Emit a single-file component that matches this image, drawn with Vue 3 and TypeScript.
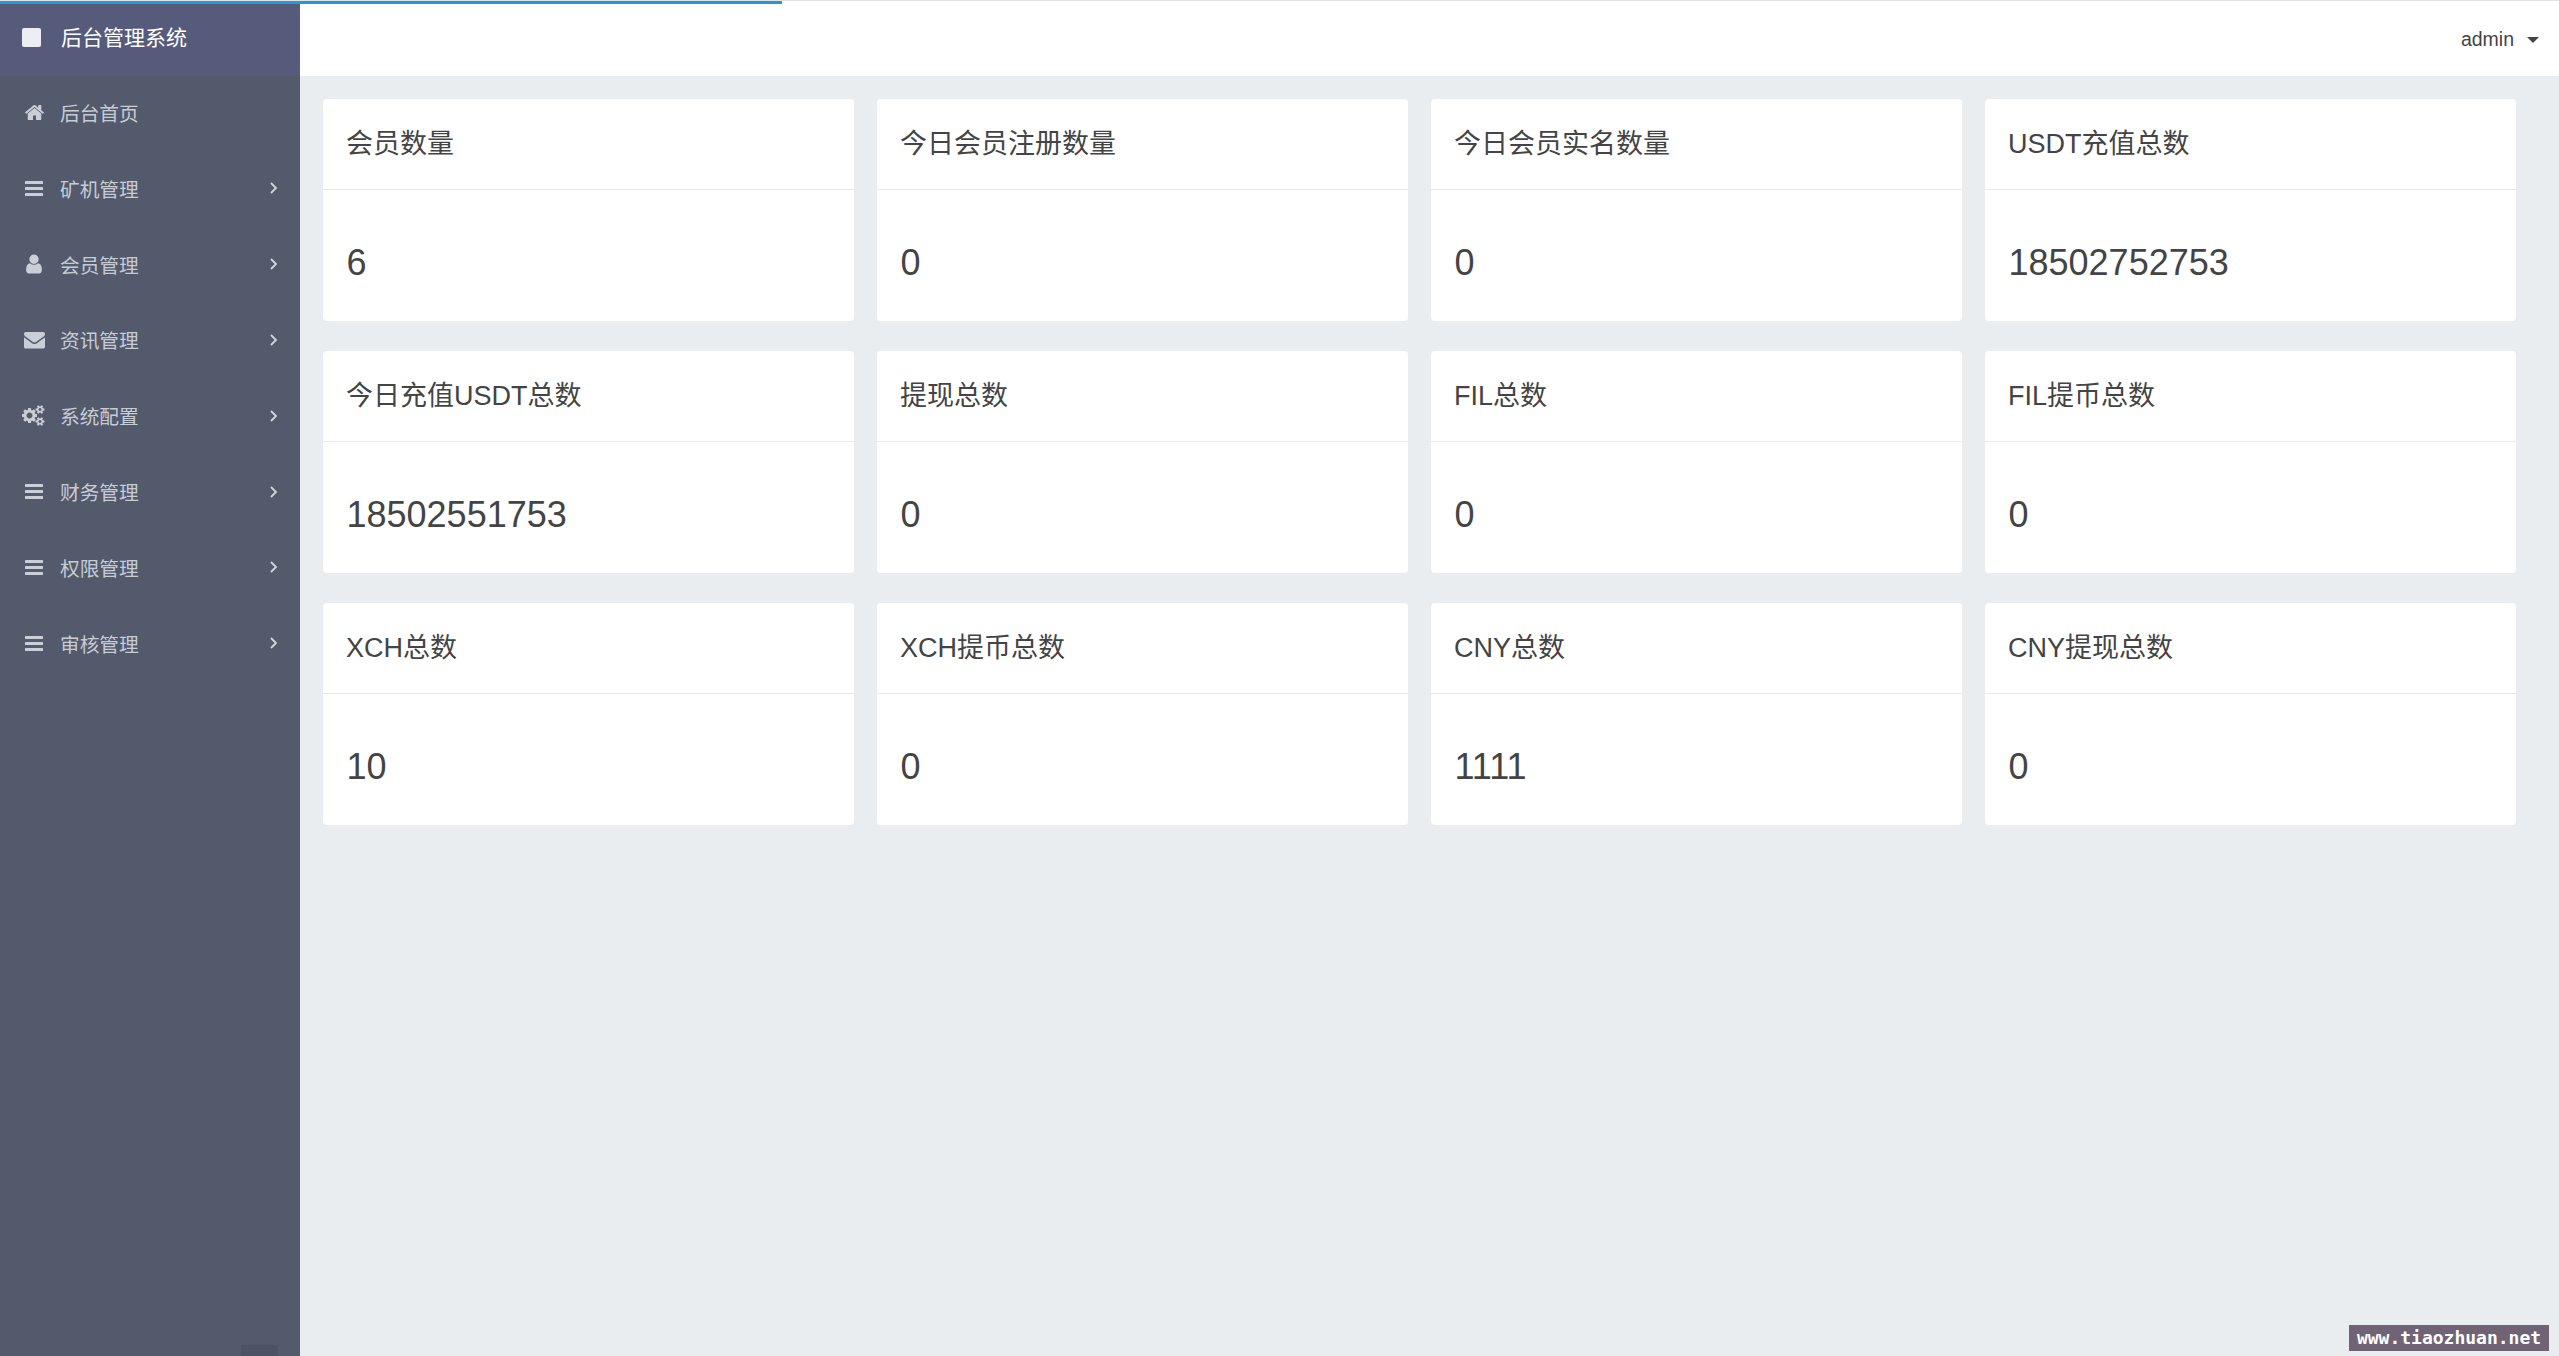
<script setup lang="ts">
type IconName = 'home' | 'bars' | 'user' | 'envelope' | 'cogs'

interface MenuItem {
  label: string
  icon: IconName
  arrow: boolean
}

interface Stat {
  title: string
  value: string
}

const iconPaths: Record<Exclude<IconName, 'bars'>, { box: string; d: string }> = {
  home: {
    box: '0 0 1792 1792',
    d: 'M1472 992v480q0 26-19 45t-45 19h-384v-384h-256v384h-384q-26 0-45-19t-19-45v-480q0-1 .5-3t.5-3l575-474 575 474q1 2 1 6zm223-69l-62 74q-8 9-21 11h-3q-13 0-21-7l-692-577-692 577q-12 8-24 7-13-2-21-11l-62-74q-8-10-7-23.500t11-21.500l719-599q32-26 76-26t76 26l244 204v-195q0-14 9-23t23-9h192q14 0 23 9t9 23v408l219 182q10 8 11 21.500t-7 23.500z'
  },
  user: {
    box: '0 0 1792 1792',
    d: 'M1536 1399q0 109-62.500 187t-150.500 78h-854q-88 0-150.500-78t-62.500-187q0-85 8.500-160.500t31.500-152 58.500-131 94-89 134.500-34.500q131 128 313 128t313-128q76 0 134.500 34.500t94 89 58.500 131 31.500 152 8.500 160.500zm-256-887q0 159-112.500 271.500t-271.500 112.500-271.500-112.500-112.500-271.500 112.500-271.500 271.500-112.500 271.500 112.500 112.500 271.500z'
  },
  envelope: {
    box: '0 0 1792 1792',
    d: 'M1792 710v794q0 66-47 113t-113 47h-1472q-66 0-113-47t-47-113v-794q44 49 101 87 362 246 497 345 57 42 92.500 65.500t94.500 48 110 24.500h2q51 0 110-24.500t94.500-48 92.500-65.500q170-123 498-345 57-39 100-87zm0-294q0 79-49 151t-122 123q-376 261-468 325-10 7-42.500 30.500t-54 38-52 32.500-57.500 27-50 9h-2q-23 0-50-9t-57.500-27-52-32.500-54-38-42.500-30.500q-91-64-262-182.500t-205-142.500q-62-42-117-115.500t-55-136.500q0-78 41.500-130t118.500-52h1472q65 0 112.500 47t47.500 113z'
  },
  cogs: {
    box: '0 0 2048 1792',
    d: 'M896 896q0-106-75-181t-181-75-181 75-75 181 75 181 181 75 181-75 75-181zm768 512q0-52-38-90t-90-38-90 38-38 90q0 53 37.500 90.500t90.500 37.500 90.500-37.500 37.500-90.500zm0-1024q0-52-38-90t-90-38-90 38-38 90q0 53 37.500 90.500t90.500 37.500 90.500-37.500 37.500-90.500zm-384 421v185q0 10-7 19.500t-16 10.500l-155 24q-11 35-32 76 34 48 90 115 7 11 7 20 0 12-7 19-23 30-82.500 89.500t-78.500 59.500q-11 0-21-7l-115-90q-37 19-77 31-11 108-23 155-7 24-30 24h-186q-11 0-20-7.500t-10-17.500l-23-153q-34-10-75-31l-118 89q-7 7-20 7-11 0-21-8-144-133-144-160 0-9 7-19 10-14 41-53t47-61q-23-44-35-82l-152-24q-10-1-17-9.500t-7-19.500v-185q0-10 7-19.500t16-10.500l155-24q11-35 32-76-34-48-90-115-7-11-7-20 0-12 7-20 22-30 82-89t79-59q11 0 21 7l115 90q34-18 77-32 11-108 23-154 7-24 30-24h186q11 0 20 7.500t10 17.500l23 153q34 10 75 31l118-89q8-7 20-7 11 0 21 8 144 133 144 160 0 8-7 19-12 16-42 54t-45 60q23 48 34 82l152 23q10 2 17 10.500t7 19.500zm640 533v140q0 16-149 31-12 27-30 52 51 113 51 138 0 4-4 7-122 71-124 71-8 0-46-47t-52-68q-20 2-30 2t-30-2q-14 21-52 68t-46 47q-2 0-124-71-4-3-4-7 0-25 51-138-18-25-30-52-149-15-149-31v-140q0-16 149-31 13-29 30-52-51-113-51-138 0-4 4-7 4-2 35-20t59-34 30-16q8 0 46 46.500t52 67.500q20-2 30-2t30 2q51-71 92-112l6-2q4 0 124 70 4 3 4 7 0 25-51 138 17 23 30 52 149 15 149 31zm0-1024v140q0 16-149 31-12 27-30 52 51 113 51 138 0 4-4 7-122 71-124 71-8 0-46-47t-52-68q-20 2-30 2t-30-2q-14 21-52 68t-46 47q-2 0-124-71-4-3-4-7 0-25 51-138-18-25-30-52-149-15-149-31v-140q0-16 149-31 13-29 30-52-51-113-51-138 0-4 4-7 4-2 35-20t59-34 30-16q8 0 46 46.500t52 67.500q20-2 30-2t30 2q51-71 92-112l6-2q4 0 124 70 4 3 4 7 0 25-51 138 17 23 30 52 149 15 149 31z'
  }
}

const menu: MenuItem[] = [
  { label: '后台首页', icon: 'home', arrow: false },
  { label: '矿机管理', icon: 'bars', arrow: true },
  { label: '会员管理', icon: 'user', arrow: true },
  { label: '资讯管理', icon: 'envelope', arrow: true },
  { label: '系统配置', icon: 'cogs', arrow: true },
  { label: '财务管理', icon: 'bars', arrow: true },
  { label: '权限管理', icon: 'bars', arrow: true },
  { label: '审核管理', icon: 'bars', arrow: true }
]

const stats: Stat[] = [
  { title: '会员数量', value: '6' },
  { title: '今日会员注册数量', value: '0' },
  { title: '今日会员实名数量', value: '0' },
  { title: 'USDT充值总数', value: '18502752753' },
  { title: '今日充值USDT总数', value: '18502551753' },
  { title: '提现总数', value: '0' },
  { title: 'FIL总数', value: '0' },
  { title: 'FIL提币总数', value: '0' },
  { title: 'XCH总数', value: '10' },
  { title: 'XCH提币总数', value: '0' },
  { title: 'CNY总数', value: '1111' },
  { title: 'CNY提现总数', value: '0' }
]
</script>

<template>
  <div class="page">
    <div class="progress"></div>

    <aside class="sidebar">
      <div class="brand">
        <span class="brand-square"></span>
        <span class="brand-text">后台管理系统</span>
      </div>
      <nav class="menu">
        <a v-for="item in menu" :key="item.label" class="menu-item">
          <span class="menu-icon">
            <svg v-if="item.icon === 'bars'" class="bars" viewBox="0 0 18 15">
              <rect x="0" y="0" width="18" height="3" rx="0.5" />
              <rect x="0" y="6" width="18" height="3" rx="0.5" />
              <rect x="0" y="12" width="18" height="3" rx="0.5" />
            </svg>
            <svg
              v-else
              :class="item.icon"
              :viewBox="iconPaths[item.icon].box"
            >
              <path :d="iconPaths[item.icon].d" />
            </svg>
          </span>
          <span class="menu-label">{{ item.label }}</span>
          <svg v-if="item.arrow" class="chevron" viewBox="0 0 8 12">
            <path d="M1 1l5 5-5 5" />
          </svg>
        </a>
      </nav>
      <div class="sidebar-toggle"></div>
    </aside>

    <div class="main">
      <header class="topbar">
        <span class="username">admin</span>
        <span class="caret"></span>
      </header>
      <section class="grid">
        <article v-for="stat in stats" :key="stat.title" class="card">
          <h3 class="card-title">{{ stat.title }}</h3>
          <p class="card-value">{{ stat.value }}</p>
        </article>
      </section>
    </div>

    <div class="watermark">www.tiaozhuan.net</div>
  </div>
</template>

<style>
html,
body {
  margin: 0;
  padding: 0;
  overflow: hidden;
}
</style>

<style scoped>
.page {
  position: relative;
  display: flex;
  width: 2559px;
  height: 1356px;
  overflow: hidden;
  background: #e9edf0;
  font-family: "Liberation Sans", "Noto Sans CJK SC", sans-serif;
  color: #444444;
}

.progress {
  position: absolute;
  top: 1px;
  left: 0;
  width: 782px;
  height: 3px;
  background: #2299dd;
  z-index: 5;
}

.sidebar {
  position: relative;
  flex: 0 0 300px;
  display: flex;
  flex-direction: column;
  background: #535a6c;
}

.brand {
  display: flex;
  align-items: center;
  height: 76px;
  padding-left: 22px;
  padding-bottom: 2px;
  box-sizing: border-box;
  background: #565b7c;
  border-top: 1px solid #e2e2e2;
}

.brand-square {
  width: 19px;
  height: 19px;
  border-radius: 2px;
  background: #eceef3;
}

.brand-text {
  margin-left: 20px;
  font-size: 21px;
  line-height: 24px;
  color: #ffffff;
}

.menu {
  display: flex;
  flex-direction: column;
}

.menu-item {
  display: flex;
  align-items: center;
  box-sizing: border-box;
  height: 75.83px;
  padding-left: 23px;
  padding-bottom: 3px;
  color: #c6ccd6;
}

.menu-icon {
  display: flex;
  align-items: center;
  justify-content: center;
  width: 22px;
  height: 22px;
  fill: #c9ced8;
}

.bars {
  width: 18px;
  height: 15px;
}

.home,
.envelope {
  width: 21px;
  height: 21px;
}

.user {
  width: 22px;
  height: 22px;
}

.cogs {
  flex: none;
  width: 24px;
  height: 21px;
}

.menu-label {
  margin-left: 15px;
  font-size: 19.7px;
}

.chevron {
  width: 8px;
  height: 12px;
  margin-left: auto;
  margin-right: 22px;
  fill: none;
  stroke: #d0d5de;
  stroke-width: 1.8;
}

.sidebar-toggle {
  position: absolute;
  left: 241px;
  bottom: 0;
  width: 37px;
  height: 11px;
  border-radius: 3px 3px 0 0;
  background: #4d5364;
}

.main {
  flex: 1;
  display: flex;
  flex-direction: column;
  min-width: 0;
}

.topbar {
  display: flex;
  align-items: center;
  justify-content: flex-end;
  height: 76px;
  padding-right: 20px;
  box-sizing: border-box;
  background: #ffffff;
  border-top: 1px solid #e2e2e2;
}

.username {
  font-size: 19.5px;
  line-height: 24px;
  padding-top: 1px;
}

.caret {
  width: 0;
  height: 0;
  margin-left: 13px;
  margin-top: 2px;
  border-left: 6px solid transparent;
  border-right: 6px solid transparent;
  border-top: 6px solid #444444;
}

.grid {
  display: grid;
  grid-template-columns: repeat(4, 531px);
  grid-auto-rows: 222px;
  gap: 30px 23px;
  padding: 23px 0 0 23px;
}

.card {
  display: flex;
  flex-direction: column;
  background: #ffffff;
  border-radius: 4px;
}

.card-title {
  height: 91px;
  margin: 0;
  padding: 0 23px;
  box-sizing: border-box;
  border-bottom: 1px solid #e9ecef;
  font-size: 27px;
  font-weight: 400;
  line-height: 91px;
}

.card-value {
  margin: 0;
  padding: 0 23.5px;
  font-size: 36px;
  line-height: 146px;
}

.watermark {
  position: absolute;
  right: 10px;
  bottom: 5px;
  width: 200px;
  height: 26px;
  background: #6f6375;
  color: #ffffff;
  font-family: "DejaVu Sans Mono", monospace;
  font-size: 18px;
  font-weight: 700;
  line-height: 26px;
  text-align: center;
  white-space: nowrap;
}
</style>
